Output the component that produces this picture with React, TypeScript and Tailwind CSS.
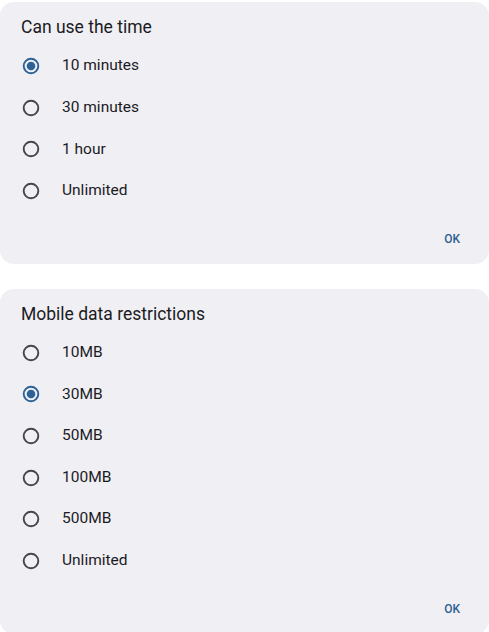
import React from "react";

function Radio({ checked }: { checked: boolean }) {
  return (
    <svg width="20" height="20" viewBox="0 0 20 20" className="shrink-0">
      <circle
        cx="10"
        cy="10"
        r="7.3"
        fill="none"
        stroke={checked ? "#2c6296" : "#44464c"}
        strokeWidth="1.9"
      />
      {checked && <circle cx="10" cy="10" r="4.3" fill="#2c6296" />}
    </svg>
  );
}

function Card({
  title,
  options,
  selected,
  className,
}: {
  title: string;
  options: string[];
  selected: number;
  className?: string;
}) {
  return (
    <div className={"rounded-[14px] bg-[#f0eff4] pt-[13px] pb-[17px] " + (className ?? "")}>
      <div className="pl-[21px] h-[24px] leading-[24px] text-[17.5px] text-[#1b1b1f] font-normal">
        {title}
      </div>
      <div className="mt-[6.2px] flex flex-col">
        {options.map((o, i) => (
          <div key={o} className="h-[41.6px] flex items-center">
            <div className="w-[62px] flex pl-[21px]">
              <Radio checked={i === selected} />
            </div>
            <span className="text-[15.5px] text-[#1b1b1f]">{o}</span>
          </div>
        ))}
      </div>
      <div className="mt-[19.2px] h-[16px] leading-[16px] flex justify-end pr-[29px]">
        <span className="text-[12px] font-medium text-[#2c5f92]">OK</span>
      </div>
    </div>
  );
}

export default function App() {
  return (
    <div
      className="w-[489px] h-[632px] overflow-hidden bg-white"
      style={{ fontFamily: "Roboto, 'Noto Sans', sans-serif" }}
    >
      <Card
        className="mt-[2px]"
        title="Can use the time"
        options={["10 minutes", "30 minutes", "1 hour", "Unlimited"]}
        selected={0}
      />
      <Card
        className="mt-[25px]"
        title="Mobile data restrictions"
        options={["10MB", "30MB", "50MB", "100MB", "500MB", "Unlimited"]}
        selected={1}
      />
    </div>
  );
}
